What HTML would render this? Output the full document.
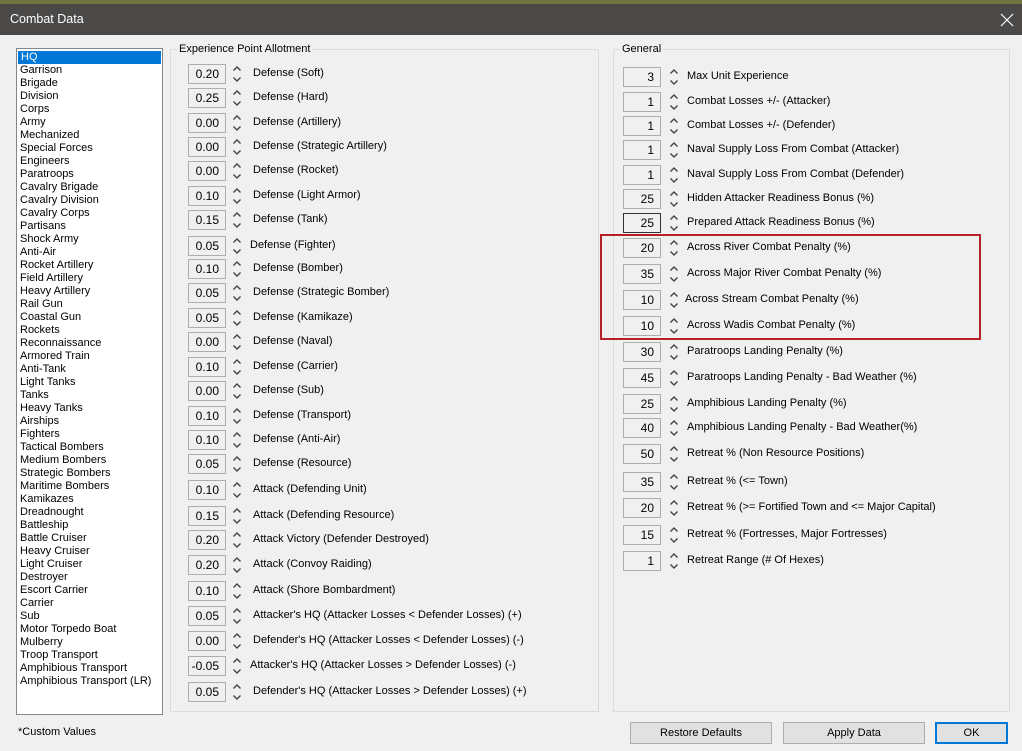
<!DOCTYPE html>
<html><head><meta charset="utf-8"><style>
*{margin:0;padding:0;box-sizing:border-box}
body{width:1022px;height:751px;overflow:hidden;background:#f0f0f0;font-family:"Liberation Sans",sans-serif;font-size:11px;color:#000;position:relative}
.map{position:absolute;left:0;top:0;width:1022px;height:5px;background:#6f7440}
.title{position:absolute;left:0;top:4px;width:1022px;height:31px;background:#4a4948;color:#fff;font-size:12.5px;line-height:31px;padding-left:10px}
.x{position:absolute;left:1000px;top:9px;width:14px;height:14px}
.list{position:absolute;left:16px;top:48px;width:147px;height:667px;background:#fff;border:1px solid #828790;padding-top:2px}
.list div{height:13px;line-height:13px;padding-left:3px;white-space:nowrap}
.list .sel{background:#0078d7;color:#fff;margin:0 1px}
.grp{position:absolute;border:1px solid #dcdcdc}
.gl{position:absolute;top:-8px;left:6px;background:#f0f0f0;padding:0 2px;line-height:14px}
.r{position:absolute;height:20px}
.in{position:absolute;left:0;top:0;width:38px;height:20px;background:#f0f0f0;border:1px solid #adadad;text-align:right;padding-right:6px;line-height:18px;font-size:12px}
.sp{position:absolute;top:0;width:10px;height:20px}
.lb{position:absolute;top:0;line-height:19px;white-space:nowrap}
.e .sp{left:44px}.e .lb{left:65px}
.g .sp{left:46px}.g .lb{left:64px}
.btn{position:absolute;top:722px;height:22px;background:#e1e1e1;border:1px solid #adadad;text-align:center;line-height:20px}
</style></head><body>
<div class="map"></div>
<div class="title">Combat Data<svg class="x" viewBox="0 0 14 14"><path d="M1 1L13 13M13 1L1 13" stroke="#fff" stroke-width="1.2"/></svg></div>
<svg width="0" height="0" style="position:absolute"><defs><g id="s"><path d="M1.5 6.5L5 3L8.5 6.5M1.5 13.5L5 17L8.5 13.5" fill="none" stroke="#444" stroke-width="1.4"/></g></defs></svg>
<div class="list">
<div class="sel">HQ</div><div>Garrison</div><div>Brigade</div><div>Division</div><div>Corps</div><div>Army</div><div>Mechanized</div><div>Special Forces</div><div>Engineers</div><div>Paratroops</div><div>Cavalry Brigade</div><div>Cavalry Division</div><div>Cavalry Corps</div><div>Partisans</div><div>Shock Army</div><div>Anti-Air</div><div>Rocket Artillery</div><div>Field Artillery</div><div>Heavy Artillery</div><div>Rail Gun</div><div>Coastal Gun</div><div>Rockets</div><div>Reconnaissance</div><div>Armored Train</div><div>Anti-Tank</div><div>Light Tanks</div><div>Tanks</div><div>Heavy Tanks</div><div>Airships</div><div>Fighters</div><div>Tactical Bombers</div><div>Medium Bombers</div><div>Strategic Bombers</div><div>Maritime Bombers</div><div>Kamikazes</div><div>Dreadnought</div><div>Battleship</div><div>Battle Cruiser</div><div>Heavy Cruiser</div><div>Light Cruiser</div><div>Destroyer</div><div>Escort Carrier</div><div>Carrier</div><div>Sub</div><div>Motor Torpedo Boat</div><div>Mulberry</div><div>Troop Transport</div><div>Amphibious Transport</div><div>Amphibious Transport (LR)</div>
</div>
<div style="position:absolute;left:18px;top:726px">*Custom Values</div>

<div class="grp" style="left:170px;top:49px;width:429px;height:663px"><span class="gl">Experience Point Allotment</span></div>
<div class="grp" style="left:613px;top:49px;width:397px;height:663px"><span class="gl">General</span></div>

<div class="r e" style="left:188px;top:64px"><div class="in">0.20</div><svg class="sp"><use href="#s"/></svg><div class="lb">Defense (Soft)</div></div>
<div class="r e" style="left:188px;top:88px"><div class="in">0.25</div><svg class="sp"><use href="#s"/></svg><div class="lb">Defense (Hard)</div></div>
<div class="r e" style="left:188px;top:113px"><div class="in">0.00</div><svg class="sp"><use href="#s"/></svg><div class="lb">Defense (Artillery)</div></div>
<div class="r e" style="left:188px;top:137px"><div class="in">0.00</div><svg class="sp"><use href="#s"/></svg><div class="lb">Defense (Strategic Artillery)</div></div>
<div class="r e" style="left:188px;top:161px"><div class="in">0.00</div><svg class="sp"><use href="#s"/></svg><div class="lb">Defense (Rocket)</div></div>
<div class="r e" style="left:188px;top:186px"><div class="in">0.10</div><svg class="sp"><use href="#s"/></svg><div class="lb">Defense (Light Armor)</div></div>
<div class="r e" style="left:188px;top:210px"><div class="in">0.15</div><svg class="sp"><use href="#s"/></svg><div class="lb">Defense (Tank)</div></div>
<div class="r e" style="left:188px;top:236px"><div class="in">0.05</div><svg class="sp"><use href="#s"/></svg><div class="lb" style="left:62px">Defense (Fighter)</div></div>
<div class="r e" style="left:188px;top:259px"><div class="in">0.10</div><svg class="sp"><use href="#s"/></svg><div class="lb">Defense (Bomber)</div></div>
<div class="r e" style="left:188px;top:283px"><div class="in">0.05</div><svg class="sp"><use href="#s"/></svg><div class="lb">Defense (Strategic Bomber)</div></div>
<div class="r e" style="left:188px;top:308px"><div class="in">0.05</div><svg class="sp"><use href="#s"/></svg><div class="lb">Defense (Kamikaze)</div></div>
<div class="r e" style="left:188px;top:332px"><div class="in">0.00</div><svg class="sp"><use href="#s"/></svg><div class="lb">Defense (Naval)</div></div>
<div class="r e" style="left:188px;top:357px"><div class="in">0.10</div><svg class="sp"><use href="#s"/></svg><div class="lb">Defense (Carrier)</div></div>
<div class="r e" style="left:188px;top:381px"><div class="in">0.00</div><svg class="sp"><use href="#s"/></svg><div class="lb">Defense (Sub)</div></div>
<div class="r e" style="left:188px;top:406px"><div class="in">0.10</div><svg class="sp"><use href="#s"/></svg><div class="lb">Defense (Transport)</div></div>
<div class="r e" style="left:188px;top:430px"><div class="in">0.10</div><svg class="sp"><use href="#s"/></svg><div class="lb">Defense (Anti-Air)</div></div>
<div class="r e" style="left:188px;top:454px"><div class="in">0.05</div><svg class="sp"><use href="#s"/></svg><div class="lb">Defense (Resource)</div></div>
<div class="r e" style="left:188px;top:480px"><div class="in">0.10</div><svg class="sp"><use href="#s"/></svg><div class="lb">Attack (Defending Unit)</div></div>
<div class="r e" style="left:188px;top:506px"><div class="in">0.15</div><svg class="sp"><use href="#s"/></svg><div class="lb">Attack (Defending Resource)</div></div>
<div class="r e" style="left:188px;top:530px"><div class="in">0.20</div><svg class="sp"><use href="#s"/></svg><div class="lb">Attack Victory (Defender Destroyed)</div></div>
<div class="r e" style="left:188px;top:555px"><div class="in">0.20</div><svg class="sp"><use href="#s"/></svg><div class="lb">Attack (Convoy Raiding)</div></div>
<div class="r e" style="left:188px;top:581px"><div class="in">0.10</div><svg class="sp"><use href="#s"/></svg><div class="lb">Attack (Shore Bombardment)</div></div>
<div class="r e" style="left:188px;top:606px"><div class="in">0.05</div><svg class="sp"><use href="#s"/></svg><div class="lb">Attacker's HQ (Attacker Losses &lt; Defender Losses) (+)</div></div>
<div class="r e" style="left:188px;top:631px"><div class="in">0.00</div><svg class="sp"><use href="#s"/></svg><div class="lb">Defender's HQ (Attacker Losses &lt; Defender Losses) (-)</div></div>
<div class="r e" style="left:188px;top:656px"><div class="in">-0.05</div><svg class="sp"><use href="#s"/></svg><div class="lb" style="left:62px">Attacker's HQ (Attacker Losses &gt; Defender Losses) (-)</div></div>
<div class="r e" style="left:188px;top:682px"><div class="in">0.05</div><svg class="sp"><use href="#s"/></svg><div class="lb">Defender's HQ (Attacker Losses &gt; Defender Losses) (+)</div></div>

<div class="r g" style="left:623px;top:67px"><div class="in">3</div><svg class="sp"><use href="#s"/></svg><div class="lb">Max Unit Experience</div></div>
<div class="r g" style="left:623px;top:92px"><div class="in">1</div><svg class="sp"><use href="#s"/></svg><div class="lb">Combat Losses +/- (Attacker)</div></div>
<div class="r g" style="left:623px;top:116px"><div class="in">1</div><svg class="sp"><use href="#s"/></svg><div class="lb">Combat Losses +/- (Defender)</div></div>
<div class="r g" style="left:623px;top:140px"><div class="in">1</div><svg class="sp"><use href="#s"/></svg><div class="lb">Naval Supply Loss From Combat (Attacker)</div></div>
<div class="r g" style="left:623px;top:165px"><div class="in">1</div><svg class="sp"><use href="#s"/></svg><div class="lb">Naval Supply Loss From Combat (Defender)</div></div>
<div class="r g" style="left:623px;top:189px"><div class="in">25</div><svg class="sp"><use href="#s"/></svg><div class="lb">Hidden Attacker Readiness Bonus (%)</div></div>
<div class="r g" style="left:623px;top:213px"><div class="in" style="border-color:#333">25</div><svg class="sp"><use href="#s"/></svg><div class="lb">Prepared Attack Readiness Bonus (%)</div></div>
<div class="r g" style="left:623px;top:238px"><div class="in">20</div><svg class="sp"><use href="#s"/></svg><div class="lb">Across River Combat Penalty (%)</div></div>
<div class="r g" style="left:623px;top:264px"><div class="in">35</div><svg class="sp"><use href="#s"/></svg><div class="lb">Across Major River Combat Penalty (%)</div></div>
<div class="r g" style="left:623px;top:290px"><div class="in">10</div><svg class="sp"><use href="#s"/></svg><div class="lb" style="left:62px">Across Stream Combat Penalty (%)</div></div>
<div class="r g" style="left:623px;top:316px"><div class="in">10</div><svg class="sp"><use href="#s"/></svg><div class="lb">Across Wadis Combat Penalty (%)</div></div>
<div class="r g" style="left:623px;top:342px"><div class="in">30</div><svg class="sp"><use href="#s"/></svg><div class="lb">Paratroops Landing Penalty (%)</div></div>
<div class="r g" style="left:623px;top:368px"><div class="in">45</div><svg class="sp"><use href="#s"/></svg><div class="lb">Paratroops Landing Penalty - Bad Weather (%)</div></div>
<div class="r g" style="left:623px;top:394px"><div class="in">25</div><svg class="sp"><use href="#s"/></svg><div class="lb">Amphibious Landing Penalty (%)</div></div>
<div class="r g" style="left:623px;top:418px"><div class="in">40</div><svg class="sp"><use href="#s"/></svg><div class="lb">Amphibious Landing Penalty - Bad Weather(%)</div></div>
<div class="r g" style="left:623px;top:444px"><div class="in">50</div><svg class="sp"><use href="#s"/></svg><div class="lb">Retreat % (Non Resource Positions)</div></div>
<div class="r g" style="left:623px;top:472px"><div class="in">35</div><svg class="sp"><use href="#s"/></svg><div class="lb">Retreat % (&lt;= Town)</div></div>
<div class="r g" style="left:623px;top:498px"><div class="in">20</div><svg class="sp"><use href="#s"/></svg><div class="lb">Retreat % (&gt;= Fortified Town and &lt;= Major Capital)</div></div>
<div class="r g" style="left:623px;top:525px"><div class="in">15</div><svg class="sp"><use href="#s"/></svg><div class="lb">Retreat % (Fortresses, Major Fortresses)</div></div>
<div class="r g" style="left:623px;top:551px"><div class="in">1</div><svg class="sp"><use href="#s"/></svg><div class="lb">Retreat Range (# Of Hexes)</div></div>

<div style="position:absolute;left:600px;top:234px;width:381px;height:106px;border:2px solid #b5202a"></div>

<div class="btn" style="left:630px;width:142px">Restore Defaults</div>
<div class="btn" style="left:783px;width:142px">Apply Data</div>
<div class="btn" style="left:935px;width:73px;border:2px solid #0078d7;line-height:18px">OK</div>
</body></html>
